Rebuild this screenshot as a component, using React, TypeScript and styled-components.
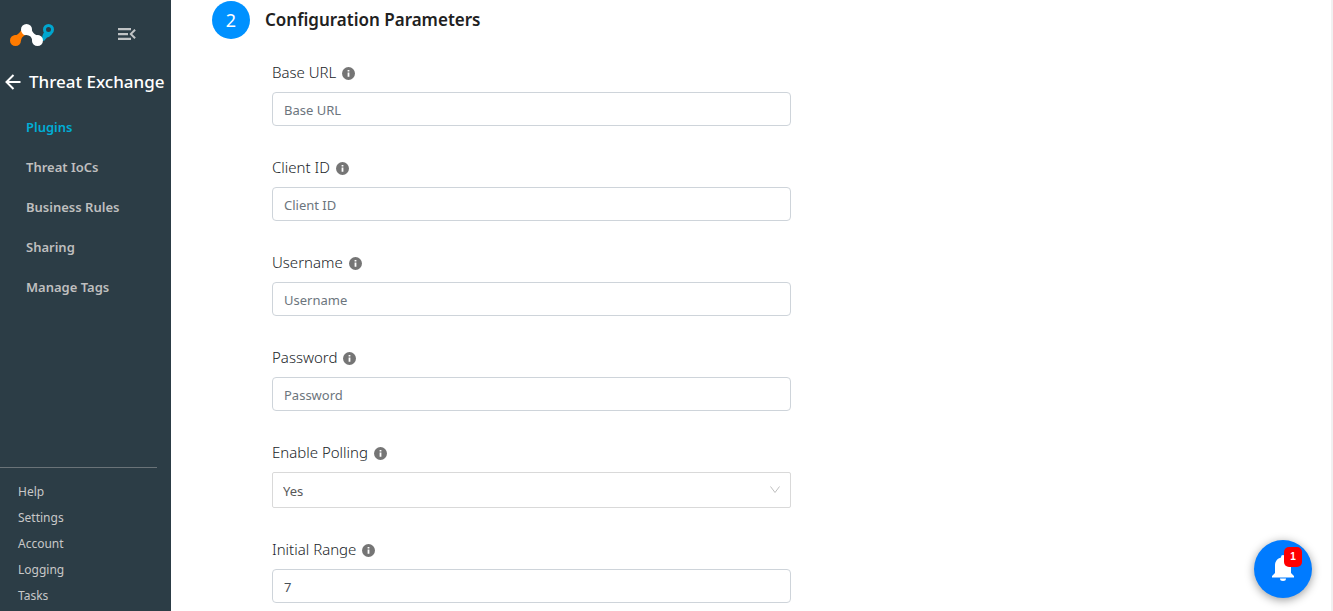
import React from "react";
import styled, { createGlobalStyle } from "styled-components";

const GlobalStyle = createGlobalStyle`
  *, *::before, *::after { box-sizing: border-box; }
  body {
    margin: 0;
    background: #fff;
    color: #212529;
    font-family: "Noto Sans", "Open Sans", sans-serif;
    font-size: 14px;
  }
  ul { list-style: none; margin: 0; padding: 0; }
  h1, h2 { margin: 0; }
`;

const Page = styled.div`
  display: grid;
  grid-template-columns: 171px minmax(0, 1fr);
  height: 100vh;
`;

const Sidebar = styled.aside`
  display: flex;
  flex-direction: column;
  background: #2c3d46;
  overflow: hidden;
`;

const Brand = styled.div`
  display: flex;
  align-items: center;
  justify-content: space-between;
  height: 68px;
  padding: 0 35px 0 9px;
`;

const IconButton = styled.button`
  display: flex;
  padding: 0;
  border: 0;
  background: none;
  color: inherit;
  cursor: pointer;
`;

const CollapseButton = styled(IconButton)`
  color: #c0c3c5;
`;

const SectionTitle = styled.div`
  display: flex;
  align-items: center;
  gap: 8px;
  height: 28px;
  padding-left: 5px;
  color: #fff;
`;

const SectionName = styled.h1`
  font-size: 17px;
  font-weight: 500;
  line-height: 28px;
  white-space: nowrap;
`;

const Nav = styled.nav`
  flex: 1;
  padding-top: 11px;
`;

const NavLink = styled.a<{ $active?: boolean }>`
  display: block;
  padding-left: 26px;
  line-height: 40px;
  font-size: 13px;
  font-weight: 600;
  text-decoration: none;
  color: ${(p) => (p.$active ? "#00aed6" : "#bfbfbf")};
`;

const FooterNav = styled.nav`
  margin-right: 14px;
  padding: 11px 0 2px 18px;
  border-top: 1px solid #6a7378;
`;

const FooterLink = styled.a`
  display: block;
  line-height: 26px;
  font-size: 12px;
  text-decoration: none;
  color: #c8c8c8;
`;

const Main = styled.main`
  padding: 1px 38px 8px 41px;
  border-right: 2px solid #f1f1f1;
  overflow: hidden;
`;

const StepHeader = styled.header`
  display: flex;
  align-items: center;
  gap: 15px;
`;

const StepNumber = styled.span`
  display: grid;
  place-items: center;
  width: 38px;
  height: 38px;
  border-radius: 50%;
  background: #0091ff;
  color: #fff;
  font-size: 18px;
`;

const StepTitle = styled.h2`
  font-size: 17px;
  font-weight: 600;
  line-height: 24px;
  color: #212121;
`;

const Form = styled.form`
  display: flex;
  flex-direction: column;
  gap: 30px;
  width: 48%;
  min-width: 280px;
  margin: 22px 0 0 60px;
`;

const Field = styled.div`
  display: flex;
  flex-direction: column;
  gap: 7px;
`;

const LabelRow = styled.div`
  display: flex;
  align-items: center;
  gap: 6px;
  height: 24px;
`;

const Label = styled.label`
  font-size: 15px;
  font-weight: 300;
  line-height: 22px;
  padding-bottom: 2px;
  color: #212529;
`;

const TextInput = styled.input`
  width: 100%;
  height: 34px;
  padding: 2px 11px 0;
  border: 1px solid #ced4da;
  border-radius: 4px;
  background: #fff;
  color: #495057;
  font-family: inherit;
  font-size: 13px;
  &::placeholder { color: #6c757d; opacity: 1; }
`;

const SelectBox = styled.div`
  position: relative;
`;

const Select = styled.select`
  display: block;
  width: 100%;
  height: 36px;
  padding: 2px 32px 0 10px;
  border: 1px solid #d9d9d9;
  border-radius: 2px;
  appearance: none;
  background: #fff;
  color: #595959;
  font-family: inherit;
  font-size: 13px;
`;

const Caret = styled.svg`
  position: absolute;
  top: 12px;
  right: 10px;
  pointer-events: none;
`;

const Notifications = styled.button`
  position: fixed;
  right: 21px;
  bottom: 13px;
  display: grid;
  place-items: center;
  width: 58px;
  height: 58px;
  padding: 0 0 2px;
  border: 0;
  border-radius: 50%;
  background: #007bff;
  box-shadow: 0 2px 10px rgba(0, 0, 0, 0.4);
  cursor: pointer;
`;

const Badge = styled.span`
  position: absolute;
  top: 7px;
  right: 10px;
  width: 18px;
  height: 20px;
  border-radius: 5px;
  background: #f00;
  color: #fff;
  font-size: 10px;
  font-weight: 600;
  line-height: 20px;
  text-align: center;
`;

const Logo = () => (
  <svg width="46" height="24" viewBox="0 -1 46 24" role="img" aria-label="Home">
    <path d="M5 12.500C10 12 10.500 9 12.500 7L17 11.500C14 13.500 12.500 14 12 18Z" fill="#ff7b00" />
    <circle cx="6.500" cy="17.500" r="5.500" fill="#ff7b00" />
    <path d="M33 17Q33 11.500 35 9.500L43 11Q40 14.500 38 14.500L35 18Z" fill="#00a6cf" />
    <circle cx="39.500" cy="6.500" r="4" fill="#2c3d46" stroke="#00a6cf" strokeWidth="3" />
    <path d="M21 3C23 6 22.500 8 25 10.500S30 12 32 13.500L25 21C23 19 23.500 15.500 21.500 13.500S15 13 13.500 10.500Z" fill="#fff" />
    <circle cx="17.500" cy="6.500" r="5.500" fill="#fff" />
    <circle cx="28.500" cy="17.500" r="5.500" fill="#fff" />
  </svg>
);

const InfoIcon = () => (
  <svg width="13" height="13" viewBox="0 0 13 13" aria-hidden="true">
    <circle cx="6.500" cy="6.500" r="6.500" fill="#757575" />
    <path d="M5.600 3h1.800v1.500H5.600zM5.600 5.400h1.800v4.400H5.600z" fill="#fff" />
  </svg>
);

const navItems = ["Plugins", "Threat IoCs", "Business Rules", "Sharing", "Manage Tags"];
const footerItems = ["Help", "Settings", "Account", "Logging", "Tasks"];

type FieldSpec = {
  id: string;
  label: string;
  type?: string;
  value?: string;
  options?: string[];
};

const fields: FieldSpec[] = [
  { id: "base-url", label: "Base URL" },
  { id: "client-id", label: "Client ID" },
  { id: "username", label: "Username" },
  { id: "password", label: "Password", type: "password" },
  { id: "polling", label: "Enable Polling", options: ["Yes", "No"] },
  { id: "initial-range", label: "Initial Range", value: "7" },
];

const FormField = ({ id, label, type = "text", value, options }: FieldSpec) => (
  <Field>
    <LabelRow>
      <Label htmlFor={id}>{label}</Label>
      <InfoIcon />
    </LabelRow>
    {options ? (
      <SelectBox>
        <Select id={id}>
          {options.map((o) => (
            <option key={o}>{o}</option>
          ))}
        </Select>
        <Caret width="12" height="12" viewBox="0 0 12 12" fill="none" stroke="#bfbfbf">
          <path d="M1.500 2.500L6 8.500L10.500 2.500" />
        </Caret>
      </SelectBox>
    ) : (
      <TextInput id={id} type={type} placeholder={label} defaultValue={value} autoComplete="off" />
    )}
  </Field>
);

export default function App() {
  return (
    <>
      <GlobalStyle />
      <Page>
        <Sidebar>
          <Brand>
            <Logo />
            <CollapseButton aria-label="Collapse menu">
              <svg width="18" height="12" viewBox="0 0 18 12" fill="currentColor">
                <path d="M0 0h13v2.300H0zM0 5h10v2.300H0zM0 9.700h13v2.300H0zM17.800 2.400 14.200 6l3.600 3.600L16.400 11l-5-5 5-5z" />
              </svg>
            </CollapseButton>
          </Brand>
          <SectionTitle>
            <IconButton aria-label="Back">
              <svg width="16" height="16" viewBox="0 0 16 16" fill="none" stroke="currentColor" strokeWidth="2">
                <path d="M15.500 8H2M8.500 1L1.500 8L8.500 15" />
              </svg>
            </IconButton>
            <SectionName>Threat Exchange</SectionName>
          </SectionTitle>
          <Nav aria-label="Threat Exchange">
            <ul>
              {navItems.map((item, i) => (
                <li key={item}>
                  <NavLink href="#" $active={i === 0}>{item}</NavLink>
                </li>
              ))}
            </ul>
          </Nav>
          <FooterNav aria-label="General">
            <ul>
              {footerItems.map((item) => (
                <li key={item}>
                  <FooterLink href="#">{item}</FooterLink>
                </li>
              ))}
            </ul>
          </FooterNav>
        </Sidebar>
        <Main>
          <StepHeader>
            <StepNumber>2</StepNumber>
            <StepTitle>Configuration Parameters</StepTitle>
          </StepHeader>
          <Form>
            {fields.map((f) => (
              <FormField key={f.id} {...f} />
            ))}
          </Form>
        </Main>
      </Page>
      <Notifications aria-label="Notifications">
        <svg width="22" height="26" viewBox="0 0 22 26" fill="#fff">
          <path d="M11 0a2 2 0 0 1 2 2v.6c3.600.9 6 4 6 7.800V18l3 3v1.500H0V21l3-3v-7.600c0-3.800 2.400-6.900 6-7.800V2a2 2 0 0 1 2-2zM8 23.500h6a3 2.500 0 0 1-6 0z" />
        </svg>
        <Badge>1</Badge>
      </Notifications>
    </>
  );
}
